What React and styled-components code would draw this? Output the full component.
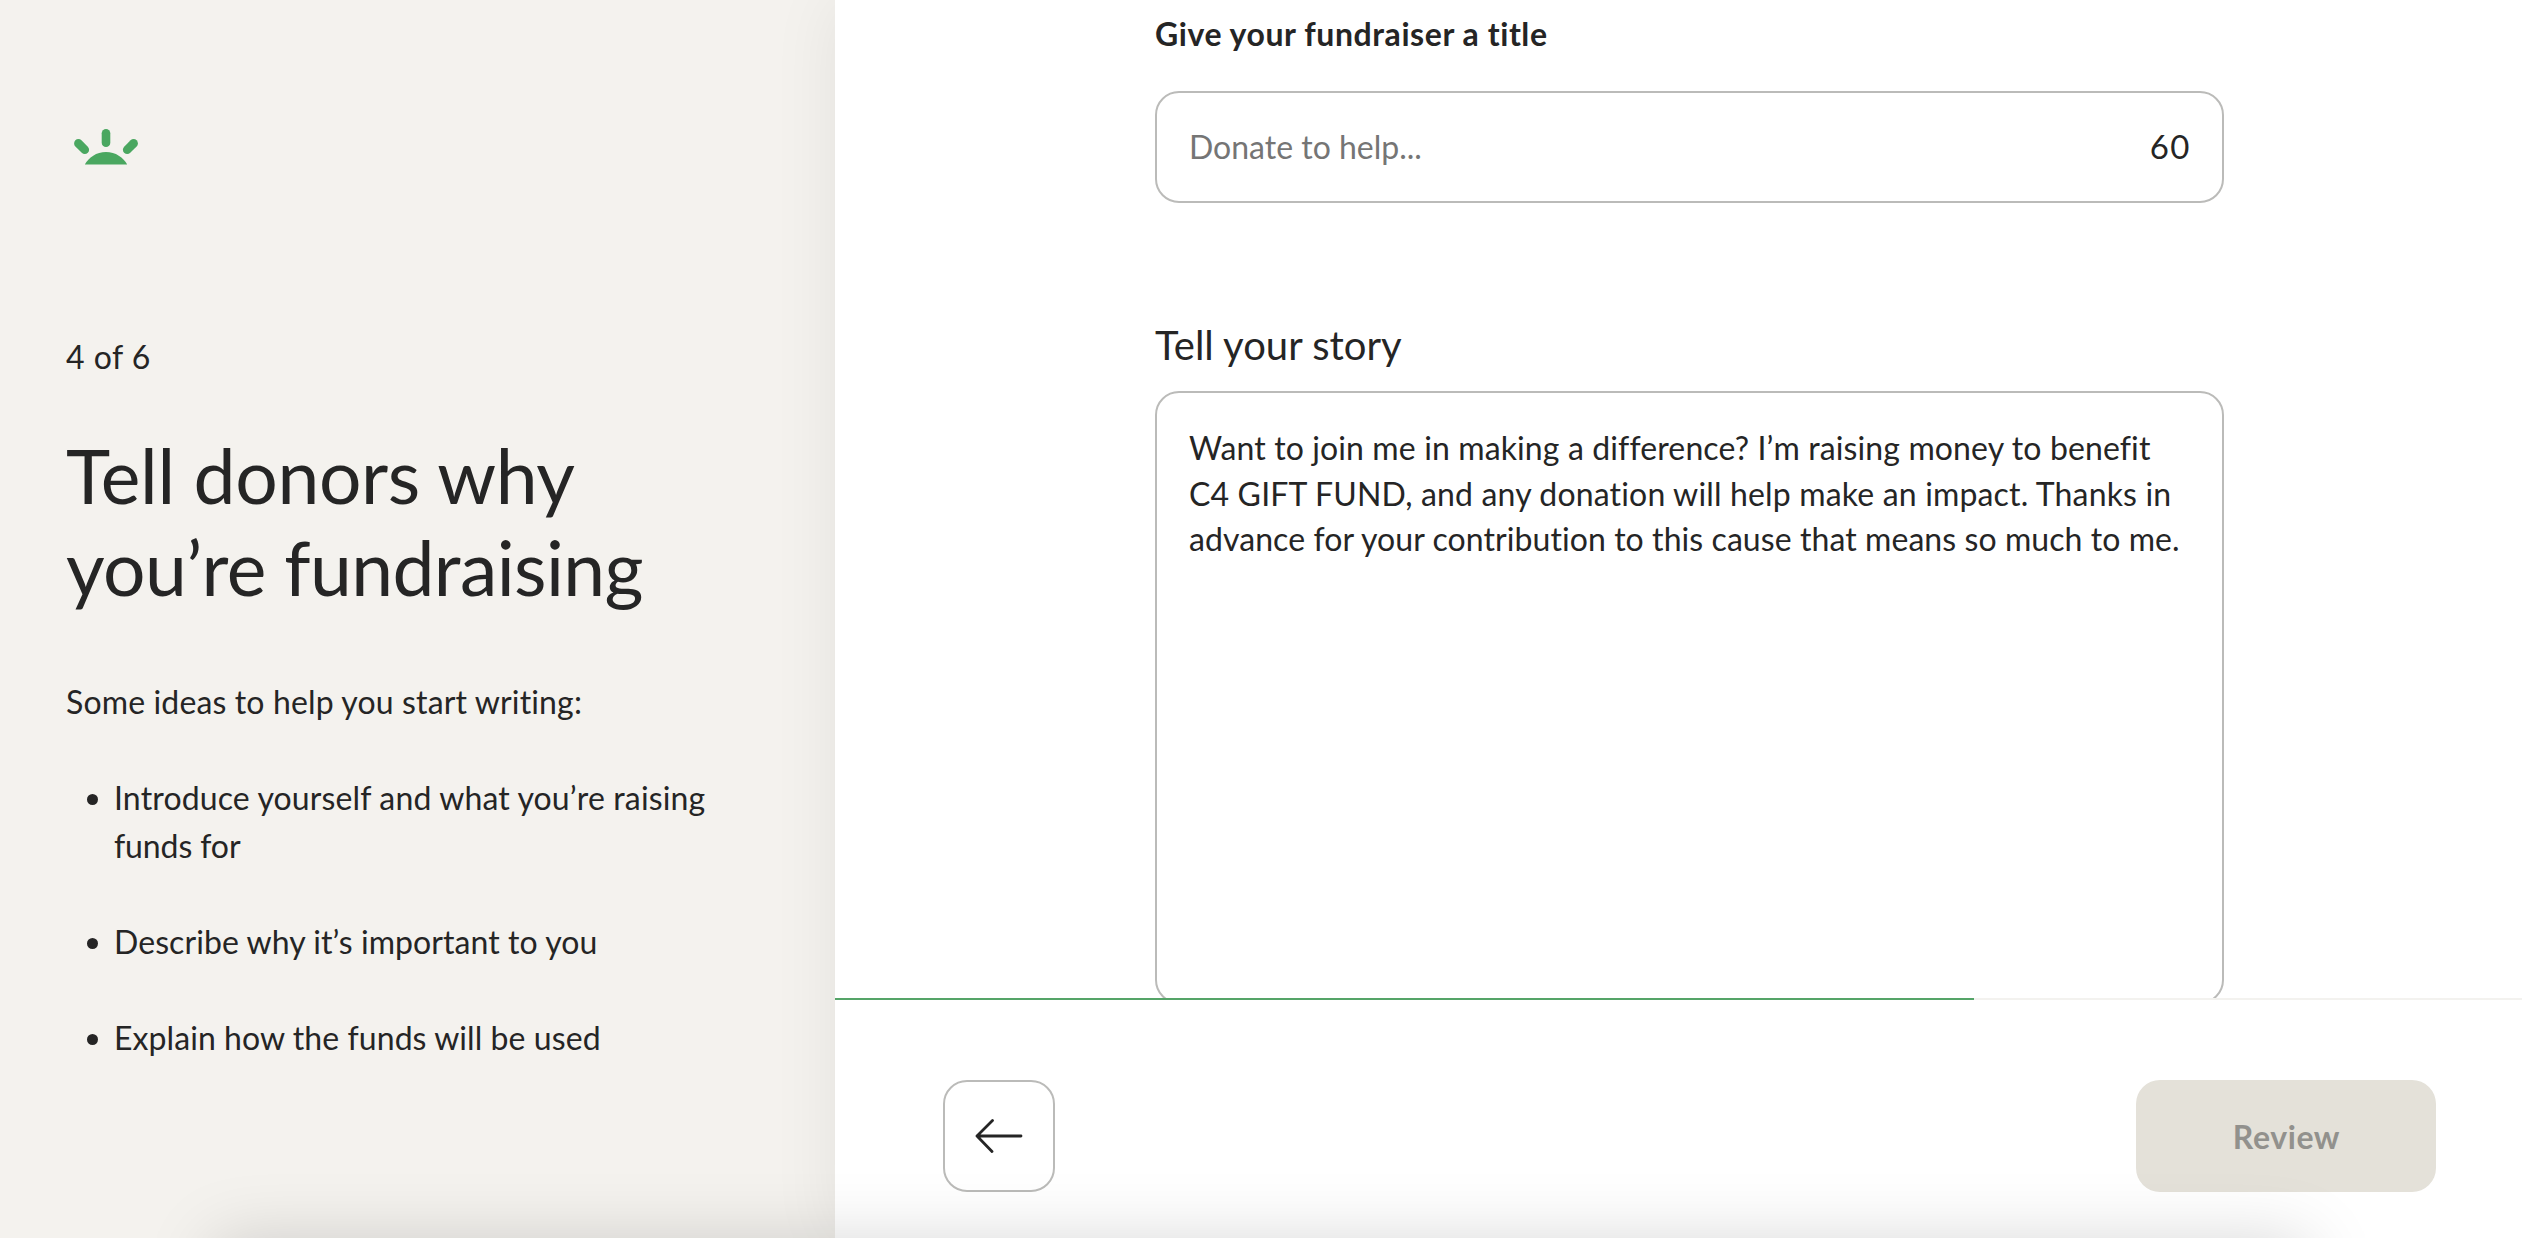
import React from "react";
import styled, { createGlobalStyle } from "styled-components";

const GlobalStyle = createGlobalStyle`
  *, *::before, *::after { box-sizing: border-box; }
  body { margin: 0; overflow: hidden; background: #fff; }
  body, input, textarea, button { font-family: Lato, "Liberation Sans", sans-serif; }
`;

const Page = styled.div`
  position: relative;
  display: flex;
  height: 100vh;
  min-height: 1238px;
  overflow: hidden;
  color: #252525;
  font-size: 32px;
  line-height: 48px;
`;

const Sidebar = styled.aside`
  width: 835px;
  flex: none;
  padding: 120px 66px 0;
  background: #f4f2ee;
`;

const Logo = styled.svg`
  display: block;
  width: 80px;
  height: 56px;
  margin-bottom: 157px;
  fill: #4aa760;
`;

const Line = styled.span`
  display: block;
  white-space: nowrap;
  letter-spacing: ${(p) => p.$track || 0}px;
`;

const Step = styled.p`
  margin: 0 0 48px;
  letter-spacing: 0.5px;
`;

const Heading = styled.h1`
  margin: 0 0 65px;
  font-size: 75px;
  line-height: 92px;
  font-weight: 400;
`;

const Lead = styled.p`
  margin: 0 0 48px;
`;

const Ideas = styled.ul`
  display: grid;
  gap: 48px;
  margin: 0;
  padding: 0;
  list-style: none;
`;

const Idea = styled.li`
  display: flex;
  padding-left: 21px;
  gap: 16px;

  &::before {
    content: "";
    flex: none;
    width: 11px;
    height: 11px;
    margin-top: 20px;
    border-radius: 50%;
    background: #252525;
  }
`;

const Main = styled.main`
  flex: 1;
  min-width: 0;
  display: flex;
  flex-direction: column;
  background: #fff;
  box-shadow: 0 0 64px rgba(0, 0, 0, 0.07);
`;

const Form = styled.form`
  height: 998px;
  flex: none;
  display: flex;
  flex-direction: column;
  padding: 10px 298px 0 320px;
  overflow: hidden;
`;

const Label = styled.label`
  display: block;
  height: 48px;
  margin-bottom: ${(p) => (p.$large ? 22 : 33)}px;
  font-size: ${(p) => (p.$large ? 40 : 32)}px;
  font-weight: ${(p) => (p.$large ? 400 : 700)};
  letter-spacing: ${(p) => (p.$large ? 0.02 : 0.57)}px;
`;

const Field = styled.div`
  flex: none;
  display: flex;
  align-items: center;
  width: 1069px;
  height: 112px;
  margin-bottom: 118px;
  padding: 0 33px 0 32px;
  border: 2px solid #bbbbb9;
  border-radius: 24px;
`;

const TitleInput = styled.input`
  flex: 1;
  min-width: 0;
  height: 60px;
  padding: 0 0 2px;
  border: 0;
  outline: 0;
  background: transparent;
  color: #252525;
  font-size: 32px;

  &::placeholder { color: #757575; opacity: 1; }
`;

const Counter = styled.span`
  padding-bottom: 2px;
  font-size: 33px;
  letter-spacing: 1.5px;
  margin-right: -2px;
`;

const Story = styled.div`
  flex: none;
  width: 1069px;
  height: 613px;
  padding: 32px 32px;
  border: 2px solid #bbbbb9;
  border-radius: 24px;
  line-height: 45.5px;
`;

const Progress = styled.div`
  height: 2px;
  flex: none;
  background: #f3f2ef;

  &::before {
    content: "";
    display: block;
    width: 67.5%;
    height: 2px;
    background: #55a468;
  }
`;

const Footer = styled.footer`
  flex: 1;
  display: flex;
  justify-content: space-between;
  align-items: flex-start;
  padding: 80px 86px 0 108px;
`;

const BackButton = styled.button`
  display: grid;
  place-items: center;
  width: 112px;
  height: 112px;
  padding: 0;
  border: 2px solid #bbbbb9;
  border-radius: 24px;
  background: #fff;

  svg { display: block; }
`;

const ReviewButton = styled.button`
  width: 300px;
  height: 112px;
  padding: 0 0 0 1px;
  border: 0;
  border-radius: 24px;
  background: #e4e1d9;
  color: #92918d;
  font-size: 32px;
  font-weight: 700;
  letter-spacing: 0.59px;
`;

const BottomShade = styled.div`
  position: absolute;
  top: 1242px;
  left: 215px;
  right: 215px;
  height: 100px;
  box-shadow: 0 0 70px rgba(0, 0, 0, 0.17);
  pointer-events: none;
`;

const ideas = [
  [["Introduce yourself and what you’re raising", 0.14], ["funds for", -0.1]],
  [["Describe why it’s important to you", 0.07]],
  [["Explain how the funds will be used", 0.07]],
];

const story = [
  ["Want to join me in making a difference? I’m raising money to benefit", 0.12],
  ["C4 GIFT FUND, and any donation will help make an impact. Thanks in", 0.16],
  ["advance for your contribution to this cause that means so much to me.", 0.075],
];

const Lines = ({ rows }) => rows.map(([text, track]) => (
  <Line key={text} $track={track}>{text}</Line>
));

export default function App() {
  return (
    <Page>
      <GlobalStyle />
      <Sidebar>
        <Logo viewBox="0 0 80 56" aria-hidden="true">
          <path d="M18.8 44.6C22.5 37.5 30.5 32 40 32s17.5 5.5 21.2 12.6Z" />
          <g fill="none" stroke="#4aa760" strokeWidth="8.6" strokeLinecap="round">
            <path d="M40 13.3v9.4" />
            <path d="m12.4 23.4 6.4 6.4" />
            <path d="m67.6 23.4-6.4 6.4" />
          </g>
        </Logo>
        <Step>4 of 6</Step>
        <Heading>
          <Lines rows={[["Tell donors why", -0.35], ["you’re fundraising", -0.6]]} />
        </Heading>
        <Lead>
          <Line $track={0.14}>Some ideas to help you start writing:</Line>
        </Lead>
        <Ideas>
          {ideas.map((rows) => (
            <Idea key={rows[0][0]}>
              <div><Lines rows={rows} /></div>
            </Idea>
          ))}
        </Ideas>
      </Sidebar>
      <Main>
        <Form>
          <Label htmlFor="title">Give your fundraiser a title</Label>
          <Field>
            <TitleInput id="title" placeholder="Donate to help..." />
            <Counter>60</Counter>
          </Field>
          <Label as="div" $large>Tell your story</Label>
          <Story role="textbox" aria-multiline="true">
            <Lines rows={story} />
          </Story>
        </Form>
        <Progress />
        <Footer>
          <BackButton type="button" aria-label="Back">
            <svg width="50" height="40" viewBox="0 0 50 40" fill="none" stroke="#252525" strokeWidth="2.8" strokeLinecap="round" strokeLinejoin="round">
              <path d="M47 20H3M18.5 4.5 3 20l15 15.5" />
            </svg>
          </BackButton>
          <ReviewButton type="button" disabled>Review</ReviewButton>
        </Footer>
      </Main>
      <BottomShade />
    </Page>
  );
}
